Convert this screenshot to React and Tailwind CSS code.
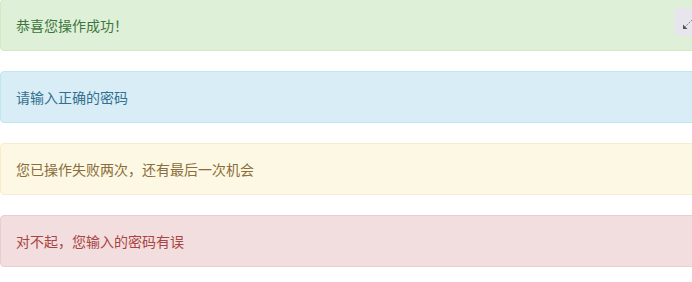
import React from "react";

const alerts = [
  { text: "恭喜您操作成功！", cls: "bg-[#dff0d8] border-[#d6e9c6] text-[#3c763d]" },
  { text: "请输入正确的密码", cls: "bg-[#d9edf7] border-[#bce8f1] text-[#31708f]" },
  { text: "您已操作失败两次，还有最后一次机会", cls: "bg-[#fcf8e3] border-[#faebcc] text-[#8a6d3b]" },
  { text: "对不起，您输入的密码有误", cls: "bg-[#f2dede] border-[#ebccd1] text-[#a94442]" },
];

const App = () => {
  return (
    <div className="relative w-[692px] h-[282px] overflow-hidden bg-white font-['Noto_Sans_CJK_SC',sans-serif]">
      <div className="w-[720px] -mt-px flex flex-col gap-5">
        {alerts.map((a, i) => (
          <div key={i} className={`border rounded px-[15px] py-[15px] text-sm leading-5 ${a.cls}`}>
            {a.text}
          </div>
        ))}
      </div>
      {/* floating expand widget at top right */}
      <div className="absolute left-[674px] top-[8px] w-[30px] h-[28px] rounded-sm bg-[#e6e6ec] flex items-center pl-[8px] pt-[4px]">
        <svg width="12" height="12" viewBox="0 0 12 12">
          <path d="M1 11 L1 6.5 L5.5 11 Z" fill="#555" />
          <path d="M3.5 8.5 L10 2" stroke="#777" strokeWidth="1" strokeDasharray="1.5 1" />
        </svg>
      </div>
    </div>
  );
};

export default App;
